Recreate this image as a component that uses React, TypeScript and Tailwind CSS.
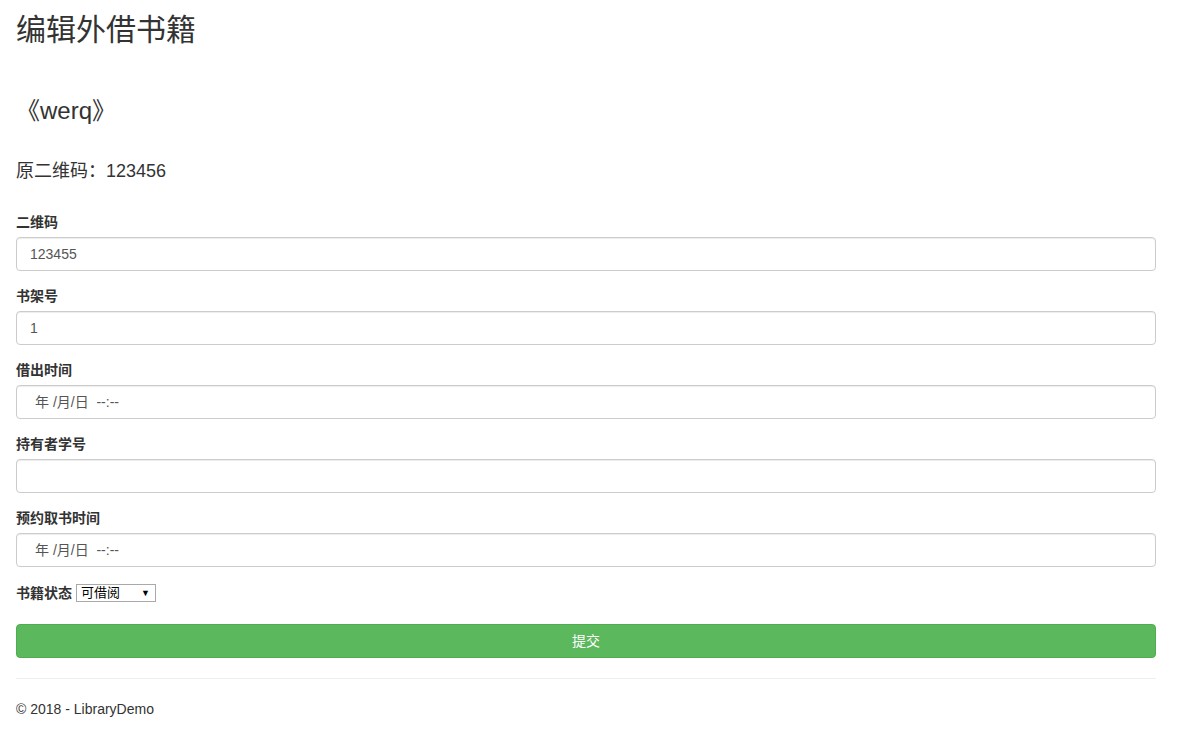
const font = {
  fontFamily:
    '"Liberation Sans", "Noto Sans CJK SC", Arial, sans-serif',
};

function Field({ label, value, date }: { label: string; value?: string; date?: boolean }) {
  return (
    <div className="mb-[15px]">
      <label className="block mb-[5px] text-[14px] leading-[20px] font-bold">{label}</label>
      <div
        className={`h-[34px] w-full rounded-[4px] border border-[#ccc] bg-white text-[14px] leading-[32px] text-[#555] shadow-[inset_0_1px_1px_rgba(0,0,0,0.075)] ${
          date ? "pl-[18px]" : "pl-[13px]"
        }`}
      >
        {date ? (
          <span className="whitespace-pre">年 /月/日  --:--</span>
        ) : (
          value
        )}
      </div>
    </div>
  );
}

export default function App() {
  return (
    <div className="min-h-[730px] bg-white text-[#333]" style={font}>
      <div className="w-[1140px] ml-[16px] pt-[13px]">
        <h2 className="text-[30px] leading-[33px] font-normal">编辑外借书籍</h2>
        <h3 className="mt-[52px] text-[24px] leading-[26px] font-normal">《werq》</h3>
        <h4 className="mt-[37px] text-[18px] leading-[20px] font-normal">原二维码：123456</h4>

        <div className="mt-[31px]">
          <Field label="二维码" value="123455" />
          <Field label="书架号" value="1" />
          <Field label="借出时间" date />
          <Field label="持有者学号" value="" />
          <Field label="预约取书时间" date />

          <div className="pt-[1px]">
            <div className="flex items-center h-[20px]">
              <span className="text-[14px] leading-[20px] font-bold">书籍状态</span>
              <div className="ml-[4px] flex h-[18px] w-[80px] items-center justify-between border border-[#a9a9a9] bg-white pl-[4px] pr-[5px] text-[13px] leading-[16px] text-black">
                <span>可借阅</span>
                <span className="text-[9px] leading-none">▼</span>
              </div>
            </div>
          </div>

          <button className="mt-[21px] block h-[34px] w-full rounded-[4px] border border-[#4cae4c] bg-[#5cb85c] text-[14px] text-white">
            提交
          </button>
        </div>

        <hr className="mt-[20px] mb-[20px] border-t border-[#eee]" />
        <p className="text-[14px] leading-[20px]">© 2018 - LibraryDemo</p>
      </div>
    </div>
  );
}
